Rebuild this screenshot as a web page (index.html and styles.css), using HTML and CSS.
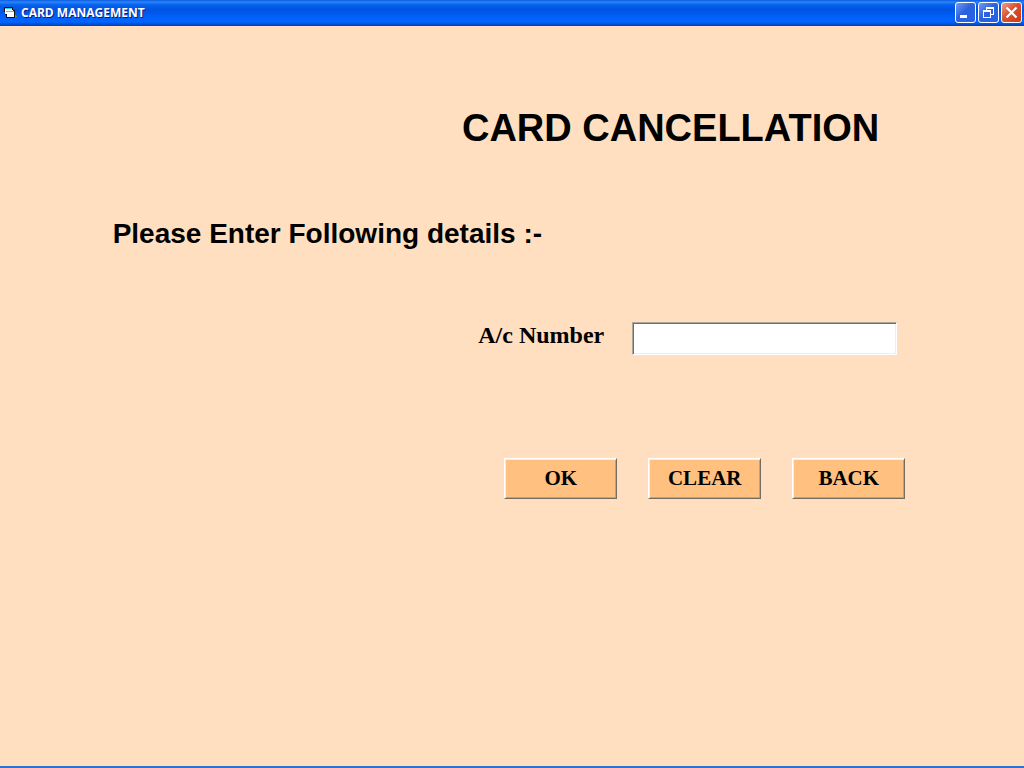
FILE: index.html
```html
<!DOCTYPE html>
<html lang="en">
<head>
<meta charset="utf-8">
<title>CARD MANAGEMENT</title>
<link rel="stylesheet" href="styles.css">
</head>
<body>
<div class="window">
  <header class="titlebar">
    <svg class="app-icon" width="14" height="14" viewBox="0 0 14 14" shape-rendering="crispEdges" aria-hidden="true">
      <path d="M10 8h1v1h1v1h1v1h-1v1h-2z" fill="#777"/>
      <path d="M0 1h9v3h2v8H2V9H1V6H0z" fill="#111"/>
      <path d="M1 2h7v1H1z" fill="#2dd"/>
      <path d="M1 3h7v1h1v1H2v3H1z" fill="#fff"/>
      <path d="M2 5h8v1H2z" fill="#2dd"/>
      <path d="M2 6h8v5H3V8H2z" fill="#fff"/>
    </svg>
    <span class="caption">CARD MANAGEMENT</span>
    <div class="controls">
      <button type="button" class="control" aria-label="Minimize">
        <svg width="19" height="19" viewBox="0 0 19 19"><path d="M4 12h7v3H4z" fill="#fff"/></svg>
      </button>
      <button type="button" class="control" aria-label="Restore">
        <svg width="19" height="19" viewBox="0 0 19 19" shape-rendering="crispEdges"><path d="M7 4h8v8h-3v-1h2V6H8v1H7zM4 7h8v8H4zM5 9v5h6V9z" fill="#fff" fill-rule="evenodd"/></svg>
      </button>
      <button type="button" class="control close" aria-label="Close">
        <svg width="19" height="19" viewBox="0 0 19 19"><path d="M4.500 4.500l10 10M14.500 4.500l-10 10" stroke="#fff" stroke-width="2.200"/></svg>
      </button>
    </div>
  </header>
  <main class="form-area">
    <h1 class="heading">CARD CANCELLATION</h1>
    <h2 class="prompt">Please Enter Following details :-</h2>
    <form class="form">
      <div class="field">
        <label class="field-label" for="account">A/c Number</label>
        <input class="field-input" id="account" type="text">
      </div>
      <div class="actions">
        <button type="button" class="action">OK</button>
        <button type="button" class="action">CLEAR</button>
        <button type="button" class="action">BACK</button>
      </div>
    </form>
  </main>
</div>
</body>
</html>
```
FILE: styles.css
```css
* {
  box-sizing: border-box;
}

body {
  margin: 0;
}

.window {
  display: flex;
  flex-direction: column;
  min-height: 100vh;
  background: #ffdfc0;
  border-bottom: 2px solid #2f72cf;
}

.titlebar {
  display: flex;
  align-items: center;
  gap: 3px;
  height: 26px;
  padding: 0 2px 1px 4px;
  background: linear-gradient(#0a5be0 0, #2a86fb 2px, #0560ea 5px, #0054e3 10px, #0060fa 17px, #0066ff 22px, #0050d8 24px, #003eb8 26px);
}

.caption {
  flex: 1;
  color: #fff;
  font: bold 12px/24px "Open Sans", "Noto Sans", sans-serif;
  text-shadow: 1px 1px 0 #0a1883;
}

.controls {
  display: flex;
  gap: 2px;
}

.control {
  display: flex;
  width: 21px;
  height: 21px;
  padding: 0;
  border: 1px solid #fff;
  border-radius: 3px;
  background: linear-gradient(135deg, #6f9bf5, #2d62dd 45%, #2460e8);
}

.control.close {
  background: linear-gradient(135deg, #f0a088, #dc5030 45%, #cc3a12);
}

.form-area {
  padding: 80px 11.600% 0 11%;
}

.heading {
  margin: 0 26px 0 0;
  font: bold 38px/44px "Liberation Sans", Arial, sans-serif;
  text-align: right;
}

.prompt {
  margin: 68px 0 0;
  font: bold 28px/32px "Liberation Sans", Arial, sans-serif;
}

.form {
  margin-top: 72px;
}

.field {
  display: flex;
  justify-content: flex-end;
  gap: 28px;
  margin-right: 8px;
}

.field-label {
  font: bold 24px/26px "Liberation Serif", "Times New Roman", serif;
}

.field-input {
  width: 265px;
  height: 33px;
  padding: 2px 4px;
  border: 1px solid;
  border-color: #aca899 #fff #fff #aca899;
  background: #fff;
  box-shadow: inset 1px 1px #716f64, inset -1px -1px #f1efe2;
  font: 20px "Liberation Serif", "Times New Roman", serif;
}

.actions {
  display: flex;
  justify-content: flex-end;
  gap: 31px;
  margin-top: 103px;
}

.action {
  width: 113px;
  height: 41px;
  padding: 0 0 1px;
  border: 1px solid;
  border-color: #fff #716f64 #716f64 #fff;
  background: #ffc080;
  box-shadow: inset 1px 1px #f1efe2, inset -1px -1px #aca899;
  color: #000;
  font: bold 21px/24px "Liberation Serif", "Times New Roman", serif;
}
```
